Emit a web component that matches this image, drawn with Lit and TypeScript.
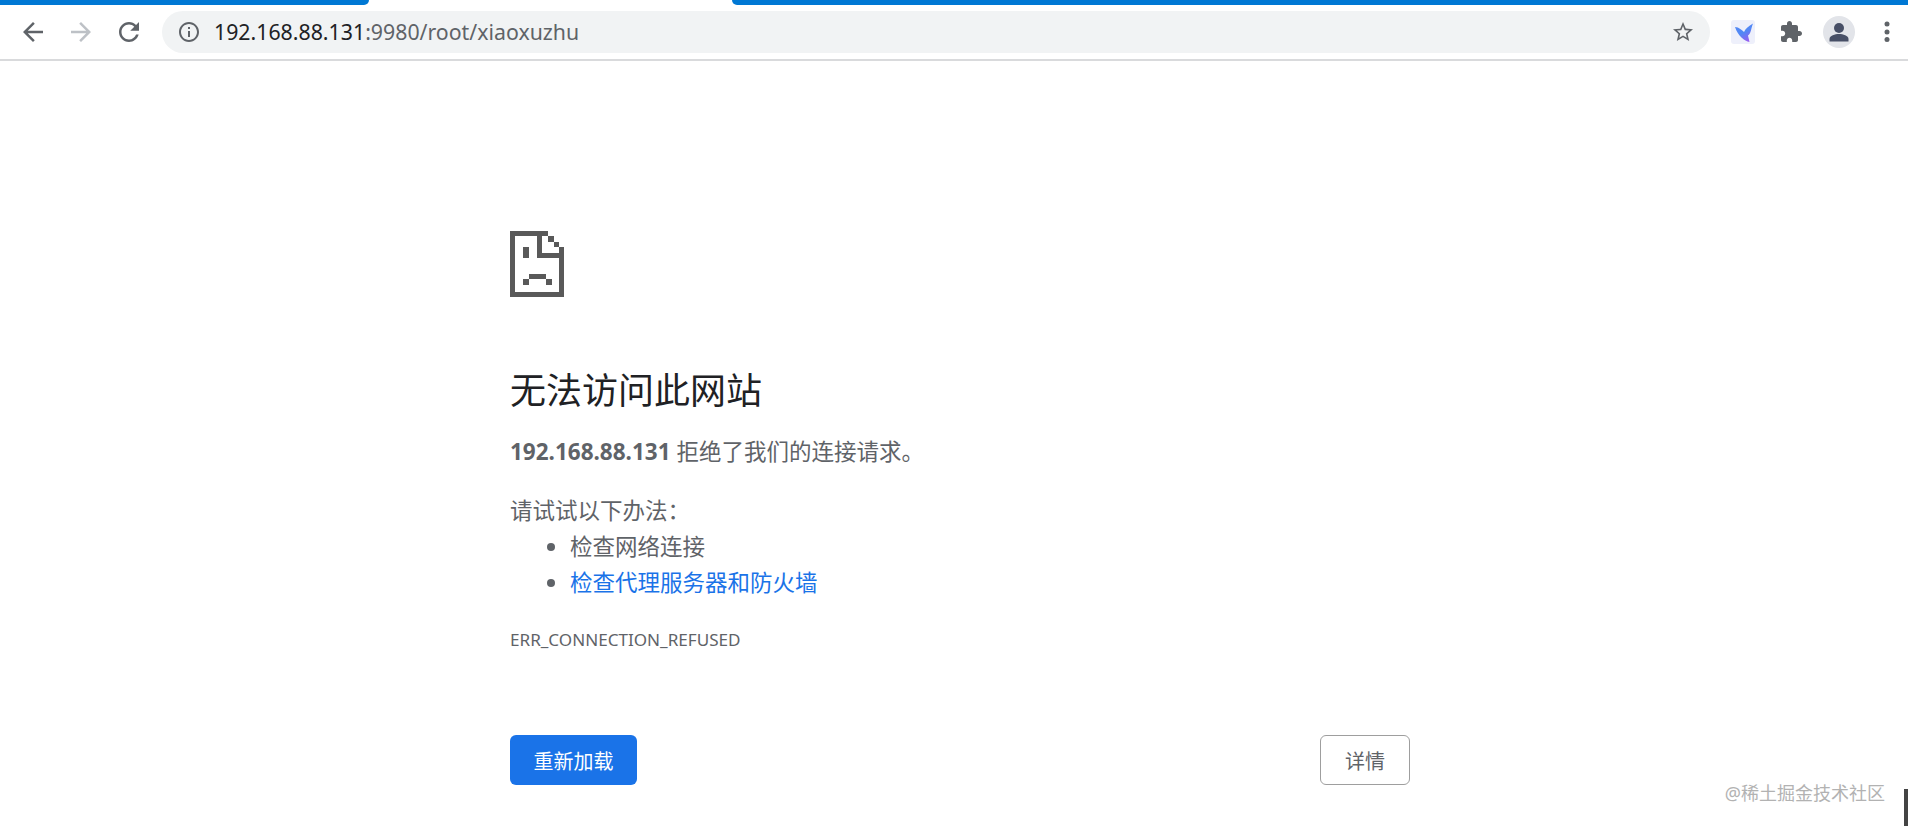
import { LitElement, html, css, svg } from 'lit';
import { customElement } from 'lit/decorators.js';

const backIcon = svg`<path d="M20 11H7.83l5.59-5.59L12 4l-8 8 8 8 1.41-1.41L7.83 13H20v-2z" />`;
const forwardIcon = svg`<path d="M4 11h12.17l-5.59-5.59L12 4l8 8-8 8-1.41-1.41L16.17 13H4v-2z" />`;
const reloadIcon = svg`<path d="M17.65 6.35C16.2 4.9 14.21 4 12 4c-4.42 0-7.99 3.58-7.99 8s3.57 8 7.99 8c3.73 0 6.84-2.55 7.73-6h-2.08c-.82 2.33-3.04 4-5.65 4-3.31 0-6-2.69-6-6s2.69-6 6-6c1.66 0 3.14.69 4.22 1.78L13 11h7V4l-2.35 2.35z" />`;
const infoIcon = svg`<path d="M11 7h2v2h-2zm0 4h2v6h-2zm1-9C6.48 2 2 6.48 2 12s4.48 10 10 10 10-4.48 10-10S17.52 2 12 2zm0 18c-4.41 0-8-3.59-8-8s3.59-8 8-8 8 3.59 8 8-3.59 8-8 8z" />`;
const starIcon = svg`<path d="M22 9.24l-7.19-.62L12 2 9.19 8.63 2 9.24l5.46 4.73L5.82 21 12 17.27 18.18 21l-1.63-7.03L22 9.24zM12 15.4l-3.76 2.27 1-4.28-3.32-2.88 4.38-.38L12 6.1l1.71 4.04 4.38.38-3.32 2.88 1 4.28L12 15.4z" />`;
const puzzleIcon = svg`<path d="M20.5 11H19V7c0-1.1-.9-2-2-2h-4V3.5C13 2.12 11.88 1 10.5 1S8 2.12 8 3.5V5H4c-1.1 0-1.99.9-1.99 2v3.8H3.5c1.49 0 2.7 1.21 2.7 2.7s-1.21 2.7-2.7 2.7H2V20c0 1.1.9 2 2 2h3.8v-1.5c0-1.49 1.21-2.7 2.7-2.7 1.49 0 2.7 1.21 2.7 2.7V22H17c1.1 0 2-.9 2-2v-4h1.5c1.38 0 2.5-1.12 2.5-2.5S21.88 11 20.5 11z" />`;

// each rect is one block of the pixel-art page, in screen pixels
const sadPage: [number, number, number, number][] = [
    [0, 0, 5, 66],
    [0, 61, 54, 5],
    [0, 0, 38, 5],
    [27, 0, 5, 27],
    [27, 22, 27, 5],
    [49, 16, 5, 50],
    [38, 5, 6, 6],
    [44, 11, 5, 5],
    [13, 16, 6, 11],
    [19, 43, 17, 5],
    [13, 48, 6, 6],
    [36, 48, 6, 6],
];

@customElement('app-root')
export class AppRoot extends LitElement {
    static styles = css`
        :host {
            display: block;
            position: relative;
            height: 826px;
            overflow: hidden;
            background: #ffffff;
            font-family: 'Noto Sans', 'Noto Sans CJK SC', sans-serif;
            color: #5f6368;
        }

        .strip {
            display: flex;
            height: 5px;
        }
        .strip .left {
            width: 369px;
            background: #0078d4;
            border-bottom-right-radius: 5px;
        }
        .strip .tab {
            width: 363px;
        }
        .strip .right {
            flex: 1;
            background: #0078d4;
            border-bottom-left-radius: 5px;
        }

        .toolbar {
            display: flex;
            align-items: center;
            height: 54px;
            padding-left: 9px;
            border-bottom: 2px solid #d9dadc;
        }
        .btn {
            display: flex;
            align-items: center;
            justify-content: center;
            flex: none;
            width: 48px;
            height: 48px;
        }
        .btn svg {
            width: 30px;
            height: 30px;
            fill: #5f6368;
        }
        .btn.off svg {
            fill: #bdc1c6;
        }
        .omnibox {
            flex: 1;
            display: flex;
            align-items: center;
            height: 42px;
            margin: 0 9px;
            padding: 0 15px;
            border-radius: 21px;
            background: #f1f3f4;
        }
        .omnibox svg {
            flex: none;
            width: 24px;
            height: 24px;
            fill: #5f6368;
        }
        .url {
            flex: 1;
            margin-left: 13px;
            font-size: 21.3px;
            line-height: 28px;
            color: #5f6368;
        }
        .url b {
            font-weight: 400;
            color: #202124;
        }
        .btn .logo {
            width: 24px;
            height: 24px;
        }
        .btn .puzzle {
            width: 24px;
            height: 24px;
        }
        .avatar {
            display: flex;
            align-items: center;
            justify-content: center;
            width: 32px;
            height: 32px;
            border-radius: 50%;
            background: #e2e4e9;
        }
        .btn .avatar svg {
            width: 22px;
            height: 22px;
            fill: #474f66;
        }
        .btn.menu {
            width: 45px;
            padding-left: 3px;
            box-sizing: border-box;
        }
        .btn.menu svg {
            width: 6px;
            height: 24px;
        }

        .page {
            width: 900px;
            margin-left: 510px;
            padding-top: 170px;
        }
        .sad {
            display: block;
            width: 54px;
            height: 66px;
            fill: #595959;
        }
        h1 {
            margin: 69px 0 0;
            font-size: 36px;
            line-height: 50px;
            font-weight: 400;
            color: #202124;
        }
        p {
            margin: 0;
            font-size: 22.5px;
            line-height: 30px;
        }
        .reason {
            margin-top: 21px;
        }
        .reason b {
            font-weight: 700;
        }
        .try {
            margin-top: 29px;
        }
        ul {
            margin: 3px 0 0;
            padding: 0 0 0 60px;
            font-size: 22.5px;
            line-height: 36px;
        }
        li a {
            color: #1a73e8;
            text-decoration: none;
        }
        p.code {
            margin-top: 27px;
            font-size: 17.1px;
            line-height: 24px;
        }
        .actions {
            display: flex;
            justify-content: space-between;
            margin-top: 83px;
        }
        .reload,
        .details {
            display: flex;
            align-items: center;
            justify-content: center;
            box-sizing: border-box;
            height: 50px;
            border-radius: 6px;
            font-size: 20px;
        }
        .reload {
            width: 127px;
            background: #1a73e8;
            color: #ffffff;
        }
        .details {
            width: 90px;
            border: 1px solid #9e9e9e;
            color: #5f6368;
        }

        .mark {
            position: absolute;
            right: 23px;
            top: 780px;
            font-size: 18px;
            line-height: 26px;
            color: #b2b2b2;
        }
        .corner {
            position: absolute;
            right: 0;
            top: 789px;
            width: 4px;
            height: 37px;
            background: #444444;
        }
    `;

    render() {
        return html`
            <div class="strip">
                <div class="left"></div>
                <div class="tab"></div>
                <div class="right"></div>
            </div>
            <div class="toolbar">
                <div class="btn"><svg viewBox="0 0 24 24">${backIcon}</svg></div>
                <div class="btn off"><svg viewBox="0 0 24 24">${forwardIcon}</svg></div>
                <div class="btn"><svg viewBox="0 0 24 24">${reloadIcon}</svg></div>
                <div class="omnibox">
                    <svg viewBox="0 0 24 24">${infoIcon}</svg>
                    <div class="url"><b>192.168.88.131</b>:9980/root/xiaoxuzhu</div>
                    <svg viewBox="0 0 24 24">${starIcon}</svg>
                </div>
                <div class="btn">
                    <svg class="logo" viewBox="0 0 24 24">
                        <defs>
                            <linearGradient id="bird" x1="0.2" y1="0.1" x2="0.7" y2="1">
                                <stop offset="0.45" stop-color="#5288f5" />
                                <stop offset="1" stop-color="#9a5cf0" />
                            </linearGradient>
                        </defs>
                        <rect width="24" height="24" rx="3" fill="#eef0fb" />
                        <path
                            d="M4 7C8 7 11 10.5 13 12C14.5 8.5 17.5 6 22 3.5C20 8 20.5 13 17 15.5L18.5 22C13.5 21 7 16 4 7Z"
                            fill="url(#bird)"
                        />
                    </svg>
                </div>
                <div class="btn"><svg class="puzzle" viewBox="0 0 24 24">${puzzleIcon}</svg></div>
                <div class="btn">
                    <div class="avatar">
                        <svg viewBox="0 0 22 22">
                            <circle cx="11" cy="7" r="5" />
                            <path d="M1.5 20.5V18C1.5 14.5 7 13 11 13S20.5 14.5 20.5 18V20.5Z" />
                        </svg>
                    </div>
                </div>
                <div class="btn menu">
                    <svg viewBox="0 0 6 24">
                        <circle cx="3" cy="4" r="2.5" />
                        <circle cx="3" cy="12" r="2.5" />
                        <circle cx="3" cy="19.5" r="2.5" />
                    </svg>
                </div>
            </div>
            <div class="page">
                <svg class="sad" viewBox="0 0 54 66">
                    ${sadPage.map(
                        ([x, y, w, h]) => svg`<rect x=${x} y=${y} width=${w} height=${h} />`
                    )}
                </svg>
                <h1>无法访问此网站</h1>
                <p class="reason"><b>192.168.88.131</b> 拒绝了我们的连接请求。</p>
                <p class="try">请试试以下办法：</p>
                <ul>
                    <li>检查网络连接</li>
                    <li><a>检查代理服务器和防火墙</a></li>
                </ul>
                <p class="code">ERR_CONNECTION_REFUSED</p>
                <div class="actions">
                    <div class="reload">重新加载</div>
                    <div class="details">详情</div>
                </div>
            </div>
            <div class="mark">@稀土掘金技术社区</div>
            <div class="corner"></div>
        `;
    }
}

declare global {
    interface HTMLElementTagNameMap {
        'app-root': AppRoot;
    }
}
